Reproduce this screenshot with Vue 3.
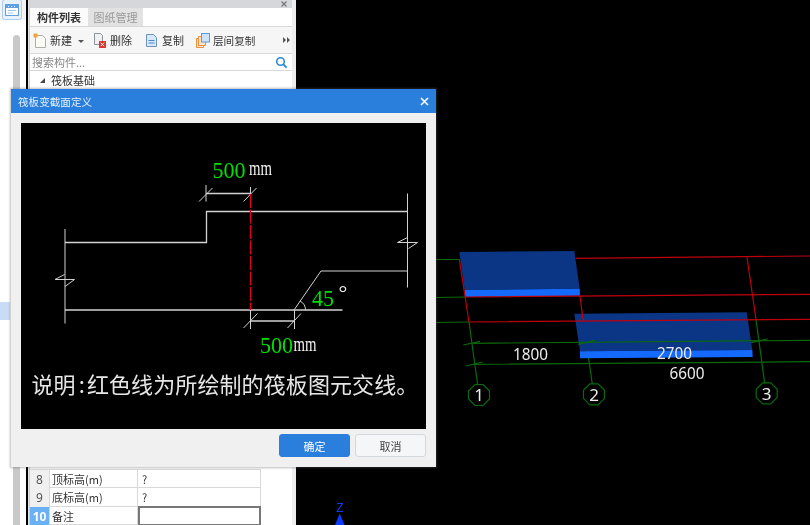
<template>
  <div class="screen">
    <!-- 左侧导航条 -->
    <aside class="rail">
      <div class="rail-icon">
        <svg width="14" height="12" viewBox="0 0 14 12">
          <rect x="0.5" y="0.5" width="13" height="11" fill="#fff" stroke="#5da0e5" />
          <rect x="1" y="1" width="12" height="3" fill="#5da0e5" />
          <path d="M3 2.5h1M6 2.5h1M9 2.5h1" stroke="#fff" />
          <path d="M3 6.5h8M3 9h5" stroke="#9cc6f0" />
        </svg>
      </div>
      <div class="rail-body">
        <div class="rail-list"><div class="rail-selected"></div></div>
        <div class="rail-thumb"></div>
      </div>
    </aside>

    <!-- 构件列表面板 -->
    <section class="panel">
      <div class="panel-head">
        <svg width="6" height="6" viewBox="0 0 6 6">
          <path d="M.5 .5l5 5M5.5 .5l-5 5" stroke="#777" stroke-width="1.2" />
        </svg>
      </div>
      <div class="tabs">
        <div class="tab active">构件列表</div>
        <div class="tab">图纸管理</div>
      </div>
      <div class="toolbar">
        <div v-for="tool in tools" :key="tool.name" class="tool" :class="tool.cls">
          <svg width="14" height="15" viewBox="0 0 14 15" v-html="tool.icon"></svg>
          <span>{{ tool.name }}</span>
        </div>
        <span class="caret"></span>
        <svg class="more" width="7" height="6" viewBox="0 0 7 6">
          <path d="M0 0l3 3-3 3zM4 0l3 3-3 3z" fill="#555" />
        </svg>
      </div>
      <div class="search">
        <span>搜索构件...</span>
        <svg width="13" height="13" viewBox="0 0 13 13">
          <circle cx="5.5" cy="5.5" r="3.8" fill="none" stroke="#2d8bd8" stroke-width="1.6" />
          <path d="M8.4 8.4l3.2 3.2" stroke="#2d8bd8" stroke-width="2" />
        </svg>
      </div>
      <div class="tree">
        <span class="tree-arrow"></span>
        <span>筏板基础</span>
      </div>
      <div class="props">
        <div v-for="row in rows" :key="row.no" class="row" :class="{ current: row.current }">
          <div class="no">{{ row.no }}</div>
          <div class="name">{{ row.name }}</div>
          <div class="val">{{ row.value }}</div>
        </div>
      </div>
    </section>

    <!-- 三维视图 -->
    <main class="view">
      <svg width="514" height="525" viewBox="296 0 514 525" class="scene">
        <g stroke="#0a6a0a" stroke-width="1.2" fill="none">
          <path d="M436 259.5H459.5M436 297.5L465 297M436 322.5L469 322" />
          <path d="M469 322L477.7 385M583.3 321.7L592.3 384M756 319.3L764.7 383.3" />
        </g>
        <polygon points="459.3,252 574.3,251 579.7,288.7 464.7,290" fill="#0b3585" />
        <polygon points="464.7,290 579.7,288.7 580,295.7 465,297" fill="#1469ff" />
        <polygon points="574.3,313.7 746.7,312.3 752.3,350 580,351.3" fill="#0b3585" />
        <polygon points="580,351.3 752.3,350 752.7,357 580,358.3" fill="#1469ff" />
        <g stroke="#c0000f" stroke-width="1.2" fill="none">
          <path d="M575.7 258.3L810 256M465 297L810 294.3M469 322L810 319.3" />
          <path d="M459.3 259.3L469 322M580 296L583.3 321.7M747 257.3L756 319.3" />
        </g>
        <g stroke="#0a6a0a" stroke-width="1.2" fill="none">
          <path d="M473.3 343.3L810 340.3M473.3 364.3L810 361.7" />
          <path d="M463.3 345L480 341.3M578.3 344.3L595 340.3M751 342.7L767.7 339M466 366L482.7 362" />
          <polygon points="474.9,384.5 483.1,384.5 489.5,391 489.5,399 483.1,405.5 474.9,405.5 468.5,399 468.5,391" />
          <polygon points="589.9,383.8 598.1,383.8 604.5,390.3 604.5,398.3 598.1,404.8 589.9,404.8 583.5,398.3 583.5,390.3" />
          <polygon points="762.6,382.8 770.8,382.8 777.2,389.3 777.2,397.3 770.8,403.8 762.6,403.8 756.2,397.3 756.2,389.3" />
        </g>
        <g class="dim">
          <text x="513" y="359.5" textLength="35" lengthAdjust="spacingAndGlyphs">1800</text>
          <text x="657" y="359" textLength="35" lengthAdjust="spacingAndGlyphs">2700</text>
          <text x="669.5" y="378.5" textLength="35" lengthAdjust="spacingAndGlyphs">6600</text>
          <text x="479" y="401" text-anchor="middle">1</text>
          <text x="594" y="400.5" text-anchor="middle">2</text>
          <text x="766.7" y="399.5" text-anchor="middle">3</text>
        </g>
        <text x="340" y="512" text-anchor="middle" class="axis">Z</text>
        <polygon points="339.7,513.5 335,525 344.5,525" fill="#0a3cff" />
      </svg>
    </main>

    <!-- 变截面定义对话框 -->
    <div class="dialog">
      <div class="dialog-title">
        <span>筏板变截面定义</span>
        <svg width="9" height="9" viewBox="0 0 9 9">
          <path d="M1 1l7 7M8 1l-7 7" stroke="#fff" stroke-width="1.6" />
        </svg>
      </div>
      <div class="dialog-body">
        <svg width="405" height="306" viewBox="21 123 405 306" class="figure">
          <g stroke="#d2d2d2" stroke-width="1" fill="none">
            <path d="M65 229V323.5M407.5 193.5V287.5" />
            <path d="M65 242.5H206.5V211.5H407.5M65 310H342.5" stroke-width="1.3" />
            <path d="M294 310L321 271H407.5" />
            <path d="M300 301Q305.5 304 305.5 310" />
            <path d="M206 193.5H250.5M250.5 321H294" stroke-width="1.4" />
            <path d="M206 185V201.5M250.5 187V201M199 201.5L212.5 188M243.5 201.5L256.5 188" />
            <path d="M250.5 310V329M294.5 310V329M243.5 328L257.5 313.5M287.5 328L301 313.5" />
            <path d="M64.5 274.5L55 279.5H74.5L65 286.5M407.5 237.5L397.5 242.5H417.5L408.5 248.5" />
          </g>
          <path d="M250.5 194V310" stroke="#e6001e" stroke-width="1.2" stroke-dasharray="14 1.5" />
          <g class="green">
            <text x="212.5" y="178" textLength="33" lengthAdjust="spacingAndGlyphs">500</text>
            <text x="312" y="306" textLength="22" lengthAdjust="spacingAndGlyphs">45</text>
            <text x="260" y="353" textLength="33" lengthAdjust="spacingAndGlyphs">500</text>
          </g>
          <g class="unit">
            <text x="249" y="175" textLength="23" lengthAdjust="spacingAndGlyphs">mm</text>
            <text x="293.5" y="351" textLength="23" lengthAdjust="spacingAndGlyphs">mm</text>
            <text x="338.5" y="300" class="deg">°</text>
          </g>
          <text x="31.5" y="392.5" class="note">说明<tspan dx="3">:</tspan><tspan dx="2">红色线为所绘制的筏板图元交线。</tspan></text>
        </svg>
      </div>
      <div class="dialog-foot">
        <button class="btn primary">确定</button>
        <button class="btn">取消</button>
      </div>
    </div>
  </div>
</template>

<script setup>
const newIcon = '<path d="M2.5 2.5h7l3 3v9h-10z" fill="#fbfbf6" stroke="#b0aea4"/><rect x="0.5" y="0.5" width="4" height="4" fill="#f2a33c"/>'
const delIcon = '<path d="M1.5 .5h6l2 2v9h-8z" fill="#eef0f2" stroke="#8d949c"/><rect x="6" y="8" width="7" height="7" fill="#e0352f"/><path d="M7.7 9.7l3.4 3.4M11.1 9.7l-3.4 3.4" stroke="#fff"/>'
const copyIcon = '<path d="M1.5 1.5h7l3 3v9h-10z" fill="#d7e7f7" stroke="#6b93bd"/><path d="M3.5 7.5h6M3.5 10h6" stroke="#4a86c4"/>'
const floorIcon = '<path d="M.5 5.5h7v9h-7z" fill="#fbe3cd" stroke="#ee8f3a"/><path d="M2.5 3.5h7v9h-7z" fill="#fbe3cd" stroke="#ee8f3a"/><rect x="5.5" y=".5" width="8" height="8.5" fill="#cfe3f8" stroke="#5a9ada"/>'

const tools = [
  { name: '新建', icon: newIcon, cls: 'tool-new' },
  { name: '删除', icon: delIcon, cls: 'tool-del' },
  { name: '复制', icon: copyIcon, cls: 'tool-copy' },
  { name: '层间复制', icon: floorIcon, cls: 'tool-floor' }
]

const rows = [
  { no: 8, name: '顶标高(m)', value: '?' },
  { no: 9, name: '底标高(m)', value: '?' },
  { no: 10, name: '备注', value: '', current: true }
]
</script>

<style>
html, body {
  margin: 0;
  background: #000;
  overflow: hidden;
}
</style>

<style scoped>
.screen {
  position: relative;
  display: flex;
  width: 810px;
  height: 525px;
  overflow: hidden;
  font-family: "Noto Sans CJK SC", "Liberation Sans", sans-serif;
  font-size: 11px;
  color: #333;
  background: #000;
  filter: blur(0.35px);
}

/* rail */
.rail {
  width: 26px;
  padding-right: 3px;
  display: flex;
  flex-direction: column;
  box-shadow: inset -1px 0 0 #e4e4e4;
  background-clip: content-box;
  background-color: #f3f3f3;
  flex: none;
}
.rail-icon {
  width: 18px;
  height: 19px;
  margin: -1px 0 0 2px;
  border: 1px solid #a9cff3;
  border-radius: 3px;
  background: #e8f2fc;
  display: flex;
  align-items: center;
  justify-content: center;
  flex: none;
}
.rail-body {
  flex: 1;
  display: flex;
  padding-top: 15px;
  background: #fff;
}
.rail-list {
  width: 13px;
  padding-top: 267px;
}
.rail-selected {
  width: 10px;
  height: 18px;
  background: #c9dcf5;
}
.rail-thumb {
  width: 7px;
  background: #c9c9c9;
  border-radius: 4px 4px 0 0;
}

/* panel */
.panel {
  width: 262px;
  display: flex;
  flex-direction: column;
  background: #fff;
  border-left: 1px solid #d0d0d0;
  border-right: 4px solid #eceef0;
  box-sizing: content-box;
  flex: none;
}
.panel-head {
  height: 8px;
  background: #d5d7db;
  position: relative;
  flex: none;
}
.panel-head svg {
  position: absolute;
  right: 5px;
  top: 1px;
}
.tabs {
  display: flex;
  height: 18px;
  border-bottom: 1px solid #d8d8d8;
  flex: none;
}
.tab {
  width: 55px;
  line-height: 18px;
  text-align: center;
  background: #e2e2e2;
  color: #999;
}
.tab.active {
  width: 58px;
  background: #fbfbfb;
  color: #333;
  font-weight: 700;
}
.toolbar {
  position: relative;
  display: flex;
  align-items: center;
  height: 26px;
  background: #f6f6f6;
  border-bottom: 1px solid #d8d8d8;
  flex: none;
}
.tool {
  display: flex;
  align-items: center;
  gap: 3px;
  white-space: nowrap;
}
.tool-new { margin-left: 3px; }
.tool-del { margin-left: 21px; }
.tool-copy { margin-left: 13px; }
.tool-floor { margin-left: 12px; }
.tool-floor span { font-size: 10.6px; }
.caret {
  position: absolute;
  left: 48px;
  top: 13px;
  border: 3px solid transparent;
  border-top-color: #555;
}
.more {
  position: absolute;
  right: 2px;
  top: 10px;
}
.search {
  display: flex;
  align-items: center;
  justify-content: space-between;
  height: 16px;
  padding: 0 4px 0 2px;
  color: #888;
  border-bottom: 1px solid #d8d8d8;
  flex: none;
}
.tree {
  display: flex;
  align-items: center;
  gap: 6px;
  height: 18px;
  padding-left: 10px;
  flex: none;
}
.tree-arrow {
  width: 0;
  height: 0;
  border-style: solid;
  border-width: 0 0 5px 5px;
  border-color: transparent transparent #444 transparent;
}
.props {
  margin-top: auto;
  width: 231px;
  border-top: 1px solid #d8d8d8;
}
.row {
  display: grid;
  grid-template-columns: 20px 88px 123px;
  height: 17.33px;
  line-height: 19px;
  border-bottom: 1px solid #d8d8d8;
}
.no {
  text-align: center;
  background: #f0f0f0;
  border-right: 1px solid #d8d8d8;
  color: #555;
  font-size: 12px;
  font-family: "Noto Sans", sans-serif;
}
.name {
  padding-left: 2px;
  border-right: 1px solid #d8d8d8;
}
.val {
  padding-left: 4px;
  border-right: 1px solid #d8d8d8;
}
.row.current .no {
  background: #6ab0f5;
  color: #fff;
  font-weight: 700;
}
.row.current .val {
  border: 2px solid #777;
  margin-top: -1px;
}

/* 3d view */
.view {
  flex: 1;
  min-width: 0;
}
.scene {
  display: block;
}
.dim text {
  font-family: "Noto Sans", sans-serif;
  font-size: 17px;
  fill: #ececec;
}
.axis {
  font-family: "Liberation Sans", sans-serif;
  font-size: 12px;
  fill: #0a3cff;
}

/* dialog */
.dialog {
  position: absolute;
  left: 11px;
  top: 89px;
  width: 425px;
  height: 378px;
  background: #f0f0f0;
  box-shadow: 0 0 2px 1px rgba(90, 90, 100, 0.4);
  display: flex;
  flex-direction: column;
}
.dialog-title {
  height: 24px;
  padding: 0 7px;
  display: flex;
  align-items: center;
  justify-content: space-between;
  background: #2a7fdc;
  color: #e6f0fb;
  font-size: 10.6px;
  flex: none;
}
.dialog-body {
  padding: 10px 10px 0;
  height: 306px;
  flex: none;
}
.figure {
  display: block;
  background: #000;
}
.figure .green text {
  font-family: "Liberation Serif", serif;
  font-size: 24px;
  fill: #00e000;
}
.figure .unit text {
  font-family: "Liberation Serif", serif;
  font-size: 20px;
  fill: #f0f0f0;
}
.figure .unit .deg {
  font-size: 22px;
}
.note {
  font-family: "Noto Sans CJK SC", sans-serif;
  font-size: 22px;
  letter-spacing: 0.1px;
  fill: #e6e6e6;
}
.dialog-foot {
  display: flex;
  justify-content: flex-end;
  gap: 5px;
  padding: 5px 10px 0;
}
.btn {
  width: 71px;
  height: 23px;
  padding: 0;
  font: inherit;
  color: #444;
  background: #f5f6f8;
  border: 1px solid #d3d7de;
  border-radius: 3px;
}
.btn.primary {
  color: #fff;
  background: #2a7fdc;
  border-color: #2a7fdc;
}
</style>
